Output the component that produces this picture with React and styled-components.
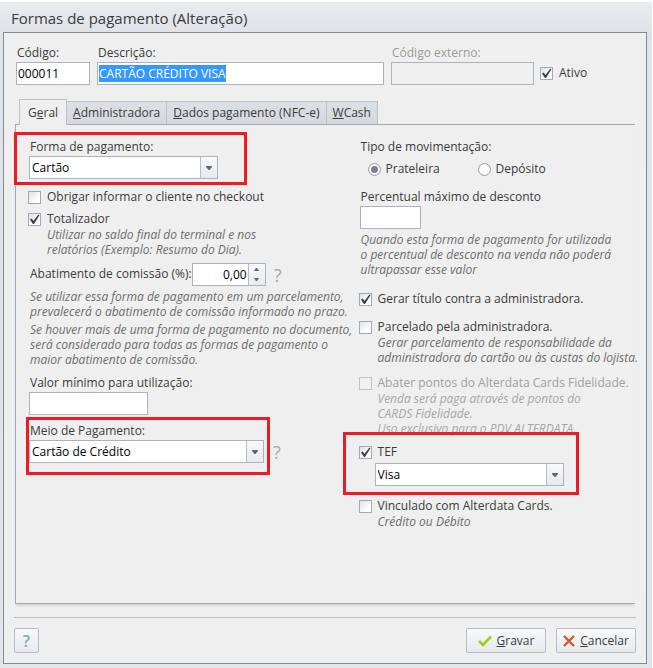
import React, { useEffect, useRef, useState } from 'react';
import styled, { createGlobalStyle } from 'styled-components';

const CheckBox = ({ children, ...props }) => (
  <CheckLabel $disabled={props.disabled}>
    <CheckMark>
      <CheckInput type="checkbox" {...props} />
      <svg viewBox="0 0 13 13" width="13" height="13" aria-hidden="true">
        <path d="M2 6.4 L3.8 5.6 L5.5 8 L10.2 1.8 L11.6 2 L6 11 L5 11 Z" />
      </svg>
    </CheckMark>
    {children}
  </CheckLabel>
);

const ComboBox = ({ options, width, ...props }) => (
  <Combo $width={width}>
    <ComboSelect {...props}>
      {options.map((option) => (
        <option key={option}>{option}</option>
      ))}
    </ComboSelect>
    <ComboArrow>
      <svg viewBox="0 0 6 4" width="6" height="4" aria-hidden="true">
        <path d="M0 0 H6 V1 L3.5 4 H2.5 L0 1 Z" />
      </svg>
    </ComboArrow>
  </Combo>
);

const App = () => {
  const descricaoRef = useRef(null);
  const [tipo, setTipo] = useState('prateleira');

  useEffect(() => {
    descricaoRef.current.focus();
    descricaoRef.current.select();
  }, []);

  return (
    <>
      <GlobalStyle />
      <Window>
        <Title>Formas de pagamento (Alteração)</Title>
        <Frame>
          <Header>
            <Field $width="74px">
              <Label htmlFor="codigo">Código:</Label>
              <TextBox id="codigo" defaultValue="000011" />
            </Field>
            <Field $grow>
              <Label htmlFor="descricao">Descrição:</Label>
              <TextBox
                id="descricao"
                ref={descricaoRef}
                defaultValue="CARTÃO CRÉDITO VISA"
              />
            </Field>
            <Field $width="143px">
              <Label htmlFor="externo" $disabled>
                Código externo:
              </Label>
              <TextBox id="externo" disabled />
            </Field>
            <Active>
              <CheckBox defaultChecked>Ativo</CheckBox>
            </Active>
          </Header>

          <Tabs role="tablist">
            <Tab type="button" role="tab" aria-selected="true" $active>
              G<u>e</u>ral
            </Tab>
            <Tab type="button" role="tab" aria-selected="false">
              <u>A</u>dministradora
            </Tab>
            <Tab type="button" role="tab" aria-selected="false">
              <u>D</u>ados pagamento (NFC-e)
            </Tab>
            <Tab type="button" role="tab" aria-selected="false">
              <u>W</u>Cash
            </Tab>
          </Tabs>

          <Panel role="tabpanel">
            <Column>
              <Marked $inset="-7px -29px -6px -15px">
                <Label htmlFor="forma">Forma de pagamento:</Label>
                <ComboBox
                  id="forma"
                  width="189px"
                  options={['Cartão', 'Dinheiro', 'Cheque']}
                />
              </Marked>
              <Block $top="10px">
                <CheckBox>Obrigar informar o cliente no checkout</CheckBox>
              </Block>
              <Block $top="6px">
                <CheckBox defaultChecked>Totalizador</CheckBox>
                <Hint $indent>
                  Utilizar no saldo final do terminal e nos
                  <br />
                  relatórios (Exemplo: Resumo do Dia).
                </Hint>
              </Block>
              <InlineField>
                <Label htmlFor="abatimento">Abatimento de comissão (%):</Label>
                <Spinner>
                  <SpinnerInput id="abatimento" defaultValue="0,00" />
                  <SpinnerButtons>
                    <button type="button" aria-label="Aumentar">
                      <svg viewBox="0 0 5 3" width="5" height="3">
                        <path d="M0 3 L2 0 H3 L5 3 Z" />
                      </svg>
                    </button>
                    <button type="button" aria-label="Diminuir">
                      <svg viewBox="0 0 5 3" width="5" height="3">
                        <path d="M0 0 L2 3 H3 L5 0 Z" />
                      </svg>
                    </button>
                  </SpinnerButtons>
                </Spinner>
                <HelpMark type="button">?</HelpMark>
              </InlineField>
              <Hint $top="3px">
                Se utilizar essa forma de pagamento em um parcelamento,
                <br />
                prevalecerá o abatimento de comissão informado no prazo.
              </Hint>
              <Hint $top="3px">
                Se houver mais de uma forma de pagamento no documento,
                <br />
                será considerado para todas as formas de pagamento o
                <br />
                maior abatimento de comissão.
              </Hint>
              <Block $top="8px">
                <Label htmlFor="minimo">Valor mínimo para utilização:</Label>
                <TextBox id="minimo" $width="119px" />
              </Block>
              <HelpRow>
                <Marked $inset="-6px -6px -12px -3px">
                  <Label htmlFor="meio">Meio de Pagamento:</Label>
                  <ComboBox
                    id="meio"
                    width="235px"
                    options={['Cartão de Crédito', 'Cartão de Débito']}
                  />
                </Marked>
                <HelpMark type="button">?</HelpMark>
              </HelpRow>
            </Column>

            <Column>
              <RadioGroup>
                <legend>Tipo de movimentação:</legend>
                <RadioRow>
                  <RadioLabel>
                    <RadioInput
                      type="radio"
                      name="tipo"
                      checked={tipo === 'prateleira'}
                      onChange={() => setTipo('prateleira')}
                    />
                    Prateleira
                  </RadioLabel>
                  <RadioLabel>
                    <RadioInput
                      type="radio"
                      name="tipo"
                      checked={tipo === 'deposito'}
                      onChange={() => setTipo('deposito')}
                    />
                    Depósito
                  </RadioLabel>
                </RadioRow>
              </RadioGroup>
              <Block $top="12px">
                <Label htmlFor="percentual">Percentual máximo de desconto</Label>
                <TextBox id="percentual" $width="61px" />
              </Block>
              <Hint $top="3px">
                Quando esta forma de pagamento for utilizada
                <br />
                o percentual de desconto na venda não poderá
                <br />
                ultrapassar esse valor
              </Hint>
              <Block $top="14px">
                <CheckBox defaultChecked>
                  Gerar título contra a administradora.
                </CheckBox>
              </Block>
              <Block $top="12px">
                <CheckBox>Parcelado pela administradora.</CheckBox>
                <Hint $indent>
                  Gerar parcelamento de responsabilidade da
                  <br />
                  administradora do cartão ou às custas do lojista.
                </Hint>
              </Block>
              <Block $top="10px">
                <CheckBox disabled>
                  Abater pontos do Alterdata Cards Fidelidade.
                </CheckBox>
                <Hint $indent $disabled>
                  Venda será paga através de pontos do
                  <br />
                  CARDS Fidelidade.
                  <br />
                  Uso exclusivo para o PDV ALTERDATA.
                </Hint>
              </Block>
              <Block $top="8px">
                <Marked $inset="-12px -15px -9px -17px">
                  <CheckBox defaultChecked>TEF</CheckBox>
                  <TefBrand>
                    <ComboBox
                      aria-label="TEF"
                      width="189px"
                      options={['Visa', 'Mastercard', 'Elo']}
                    />
                  </TefBrand>
                </Marked>
              </Block>
              <Block $top="12px">
                <CheckBox>Vinculado com Alterdata Cards.</CheckBox>
                <Hint $indent>Crédito ou Débito</Hint>
              </Block>
            </Column>
          </Panel>

          <Footer>
            <HelpButton type="button">?</HelpButton>
            <Actions>
              <ActionButton type="button">
                <svg viewBox="0 0 14 12" width="14" height="12">
                  <path
                    d="M1 6 L5 10 L13 1.5"
                    fill="none"
                    stroke="#a5cd15"
                    strokeWidth="2.6"
                  />
                </svg>
                <span>
                  <u>G</u>ravar
                </span>
              </ActionButton>
              <ActionButton type="button">
                <svg viewBox="0 0 12 12" width="12" height="12">
                  <path
                    d="M1 1 L11 11 M11 1 L1 11"
                    fill="none"
                    stroke="#d4582a"
                    strokeWidth="2.4"
                  />
                </svg>
                <span>
                  <u>C</u>ancelar
                </span>
              </ActionButton>
            </Actions>
          </Footer>
        </Frame>
      </Window>
    </>
  );
};

const GlobalStyle = createGlobalStyle`
  * {
    box-sizing: border-box;
  }
  body {
    margin: 0;
    background-color: #ffffff;
    color: #3b3b3b;
    font-family: 'Open Sans', 'Noto Sans', sans-serif;
    font-size: 12px;
    line-height: 16px;
  }
  input, select, button {
    font: inherit;
    color: inherit;
    margin: 0;
  }
`;
const Window = styled.div`
  margin: 2px 1px 0 0;
  padding: 0 5px 4px 3px;
  background: linear-gradient(#e9ebef, #dfe3e7 30px, #e2e6ea);
`;
const Title = styled.h1`
  margin: 0;
  padding: 6px 8px 4px;
  font-size: 15px;
  font-weight: normal;
  line-height: 20px;
`;
const Frame = styled.main`
  padding: 12px 10px 10px;
  border: 1px solid #82898f;
  background-color: #efefef;
`;
const Header = styled.div`
  display: flex;
  align-items: flex-end;
  gap: 7px;
  padding: 0 2px;
`;
const Field = styled.div`
  width: ${({ $width }) => $width || 'auto'};
  flex: ${({ $grow }) => ($grow ? '1' : 'none')};
`;
const Label = styled.label`
  display: block;
  margin-bottom: 1px;
  padding-left: 1px;
  color: ${({ $disabled }) => ($disabled ? '#9a9a9a' : '#3b3b3b')};
`;
const TextBox = styled.input`
  display: block;
  width: ${({ $width }) => $width || '100%'};
  height: 23px;
  padding: 0 1px;
  border: 1px solid #adb2bc;
  background-color: #ffffff;
  color: #000000;
  outline: none;
  &::selection {
    background-color: #3399ff;
    color: #ffffff;
  }
  &:disabled {
    background-color: #efefef;
  }
`;
const Active = styled.div`
  width: 93px;
  padding-bottom: 4px;
`;

const CheckLabel = styled.label`
  display: flex;
  align-items: center;
  gap: 6px;
  margin-left: -1px;
  color: ${({ $disabled }) => ($disabled ? '#a0a0a0' : '#3b3b3b')};
`;
const CheckMark = styled.span`
  display: grid;
  flex: none;
  svg {
    grid-area: 1 / 1;
    fill: #3a3d42;
    visibility: hidden;
    pointer-events: none;
  }
  input:checked + svg {
    visibility: visible;
  }
`;
const CheckInput = styled.input`
  grid-area: 1 / 1;
  width: 13px;
  height: 13px;
  appearance: none;
  border: 1px solid #a3a9b4;
  background: linear-gradient(135deg, #dfe1e6, #ffffff 70%);
  &:disabled {
    border-color: #bfc3c9;
    background: #f0f0f1;
  }
`;

const Combo = styled.div`
  position: relative;
  width: ${({ $width }) => $width};
  max-width: 100%;
`;
const ComboSelect = styled.select`
  display: block;
  width: 100%;
  height: 23px;
  padding: 0 20px 0 2px;
  appearance: none;
  border: 1px solid #adb2bc;
  border-radius: 0;
  background-color: #ffffff;
  color: #000000;
`;
const ComboArrow = styled.span`
  position: absolute;
  top: 1px;
  right: 1px;
  bottom: 1px;
  width: 17px;
  display: flex;
  align-items: center;
  justify-content: center;
  border-left: 1px solid #b7bcc5;
  background: linear-gradient(#f7f9fb, #e6eaee);
  pointer-events: none;
  svg {
    fill: #5f6771;
  }
`;

const Tabs = styled.div`
  display: flex;
  align-items: flex-end;
  margin-top: 14px;
  padding-left: 5px;
`;
const Tab = styled.button`
  height: ${({ $active }) => ($active ? '26px' : '23px')};
  margin-bottom: ${({ $active }) => ($active ? '-1px' : '0')};
  padding: ${({ $active }) => ($active ? '0 8px' : '0 6px')};
  border: 1px solid #bcc0c7;
  border-bottom: none;
  border-left-width: ${({ $active }) => ($active ? '1px' : '0')};
  background: ${({ $active }) =>
    $active ? '#efefef' : 'linear-gradient(#dcdfe3, #d5d8dd)'};
  white-space: nowrap;
  z-index: 1;
`;
const Panel = styled.section`
  display: grid;
  grid-template-columns: minmax(0, 6fr) minmax(0, 5fr);
  margin: 0 1px;
  padding: 14px 0 74px 13px;
  border: solid #a3a9b4;
  border-width: 1px 0 1px 1px;
  box-shadow: 0 3px 2px -1px #d4d4d4;
`;
const Column = styled.div`
  min-width: 0;
  white-space: nowrap;
`;
const Block = styled.div`
  margin-top: ${({ $top }) => $top};
`;
const Marked = styled.div`
  position: relative;
  width: fit-content;
  &::after {
    content: '';
    position: absolute;
    inset: ${({ $inset }) => $inset};
    border: 3px solid #ed1c24;
    pointer-events: none;
  }
`;
const Hint = styled.p`
  margin: ${({ $top }) => $top || '0'} 0 0;
  padding-left: ${({ $indent }) => ($indent ? '18px' : '1px')};
  color: ${({ $disabled }) => ($disabled ? '#a6a6a6' : '#6d6d6d')};
  font-style: italic;
  line-height: 15px;
`;
const InlineField = styled.div`
  display: flex;
  align-items: center;
  margin-top: 6px;
`;
const Spinner = styled.div`
  display: flex;
  width: 74px;
  height: 23px;
  margin-right: 8px;
  border: 1px solid #adb2bc;
  background-color: #ffffff;
`;
const SpinnerInput = styled.input`
  flex: 1;
  min-width: 0;
  padding: 0 1px;
  border: none;
  background: none;
  color: #000000;
  text-align: right;
`;
const SpinnerButtons = styled.div`
  display: flex;
  flex-direction: column;
  width: 17px;
  border-left: 1px solid #b7bcc5;
  background: linear-gradient(#f7f9fb, #e6eaee);
  button {
    flex: 1;
    display: flex;
    align-items: center;
    justify-content: center;
    padding: 0;
    border: none;
    background: none;
  }
  svg {
    fill: #5f6771;
  }
`;
const HelpMark = styled.button`
  padding: 0;
  border: none;
  background: none;
  color: #9aabb3;
  font-size: 18px;
  font-weight: 500;
  line-height: 22px;
`;
const HelpRow = styled.div`
  display: flex;
  align-items: flex-end;
  gap: 9px;
  margin-top: 8px;
`;
const RadioGroup = styled.fieldset`
  margin: 0;
  padding: 0;
  border: none;
  legend {
    padding: 0 0 0 1px;
  }
`;
const RadioRow = styled.div`
  display: flex;
  margin-top: 6px;
  padding-left: 8px;
`;
const RadioLabel = styled.label`
  display: flex;
  align-items: center;
  gap: 5px;
  width: 110px;
`;
const RadioInput = styled.input`
  flex: none;
  width: 13px;
  height: 13px;
  appearance: none;
  border: 1px solid #9aa0ab;
  border-radius: 50%;
  background: radial-gradient(#ffffff 50%, #dcdfe4);
  &:checked {
    background: radial-gradient(circle, #7d838c 3px, #f4f5f6 4px);
  }
`;
const TefBrand = styled.div`
  margin-top: 3px;
  padding-left: 15px;
`;

const Footer = styled.footer`
  display: flex;
  justify-content: space-between;
  margin-top: 13px;
  padding-top: 10px;
  border-top: 1px solid #bcbfc3;
`;
const Actions = styled.div`
  display: flex;
  gap: 10px;
`;
const ActionButton = styled.button`
  display: flex;
  align-items: center;
  justify-content: center;
  gap: 5px;
  width: 80px;
  height: 25px;
  padding: 0;
  border: 1px solid #b7bcc5;
  border-radius: 2px;
  background: linear-gradient(#f7f9fb, #e6eaee);
`;
const HelpButton = styled(ActionButton)`
  width: 25px;
  color: #8fa3aa;
  font-size: 16px;
  font-weight: 600;
`;

export default App;
